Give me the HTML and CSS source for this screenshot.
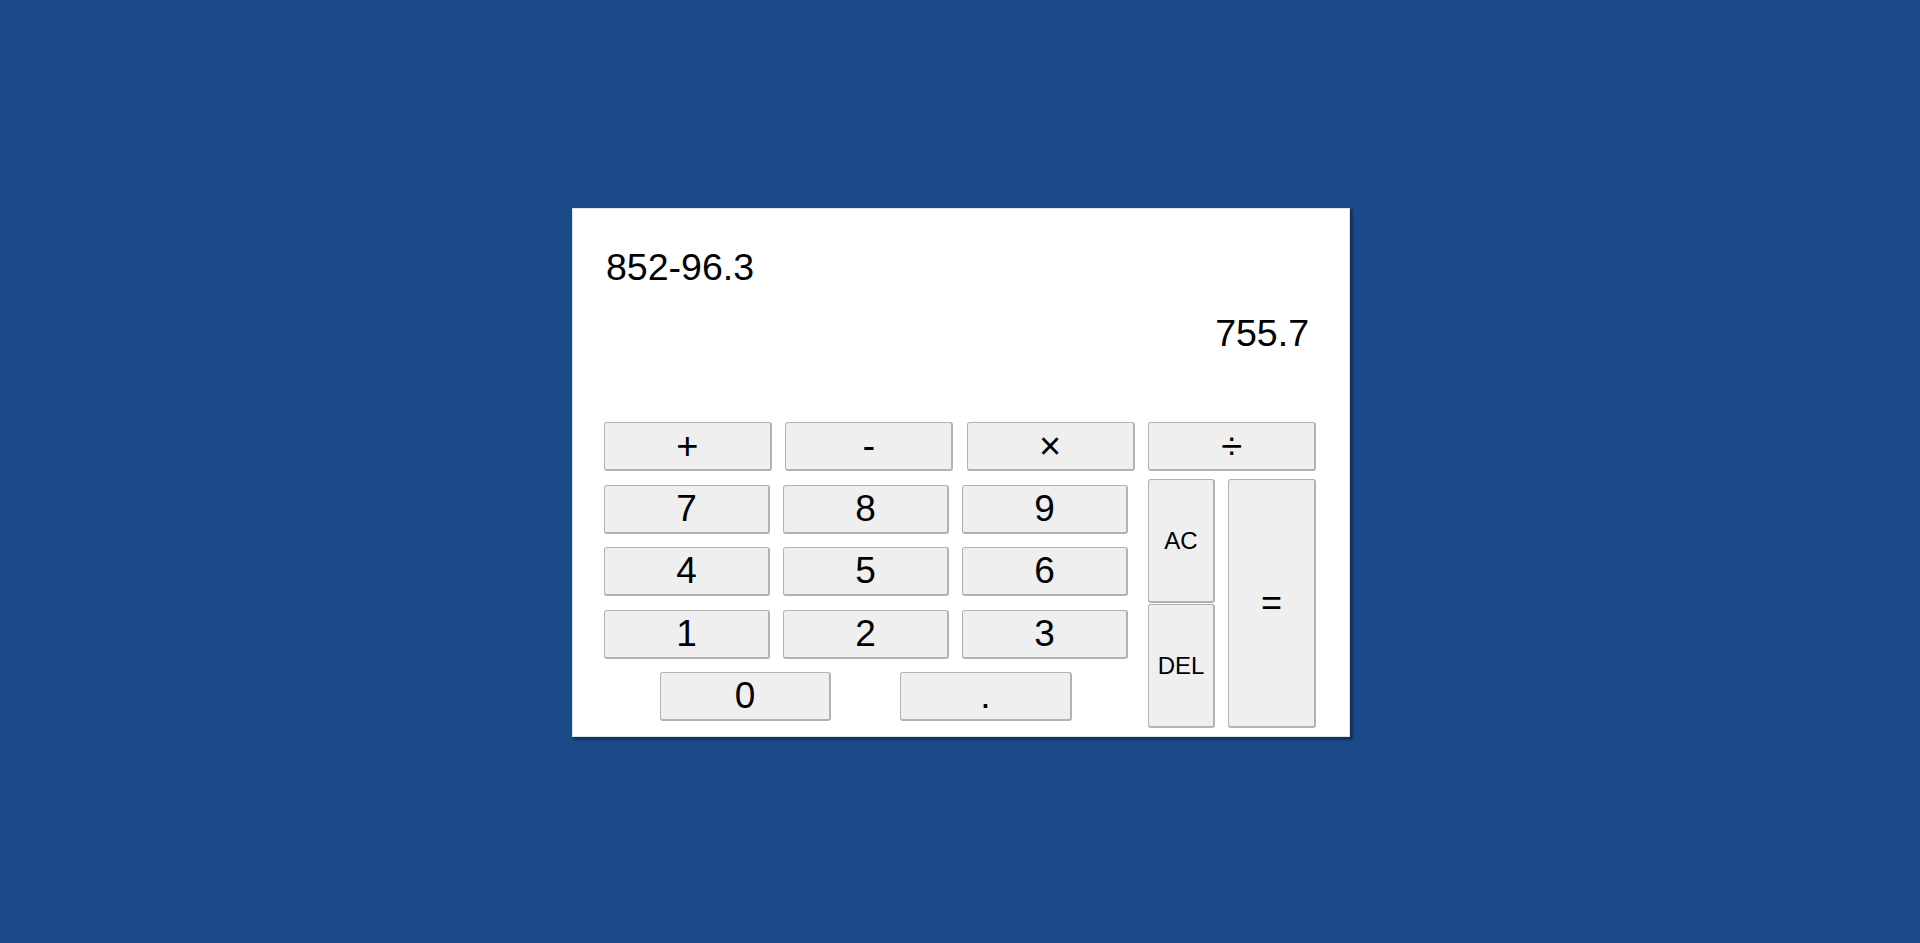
FILE: index.html
```html
<!DOCTYPE html>
<html lang="en">
<head>
<meta charset="utf-8">
<title>Calculator</title>
<link rel="stylesheet" href="styles.css">
</head>
<body>
<main class="page">
  <section class="calc">
    <div class="display">
      <div class="prev">852-96.3</div>
      <div class="current">755.7</div>
    </div>
    <div class="ops">
      <button class="btn op">+</button>
      <button class="btn op">-</button>
      <button class="btn op">×</button>
      <button class="btn op">÷</button>
    </div>
    <div class="lower">
      <div class="nums">
        <div class="grid">
          <button class="btn num">7</button>
          <button class="btn num">8</button>
          <button class="btn num">9</button>
          <button class="btn num">4</button>
          <button class="btn num">5</button>
          <button class="btn num">6</button>
          <button class="btn num">1</button>
          <button class="btn num">2</button>
          <button class="btn num">3</button>
        </div>
        <div class="last-row">
          <button class="btn num zero">0</button>
          <button class="btn num dot">.</button>
        </div>
      </div>
      <div class="side">
        <div class="clear-col">
          <button class="btn small">AC</button>
          <button class="btn small">DEL</button>
        </div>
        <button class="btn equals">=</button>
      </div>
    </div>
  </section>
</main>
</body>
</html>
```

FILE: styles.css
```css
* { box-sizing: border-box; }

html, body {
  margin: 0;
  padding: 0;
  height: 100%;
}

body {
  background: #1b4a8b;
  font-family: "Liberation Sans", Arial, sans-serif;
  color: #000;
}

.page {
  height: 943px;
  display: flex;
  justify-content: center;
  padding-top: 208px;
  padding-left: 2px;
}

.calc {
  width: 778px;
  height: 529px;
  background: #fff;
  border: 1px solid #dde5ee;
  box-shadow: 2px 2px 2px 1px rgba(0, 0, 0, 0.35);
  padding: 0 33px 0 31px;
  display: flex;
  flex-direction: column;
}

.display {
  height: 213px;
  padding-top: 37px;
}

.prev {
  font-size: 37.5px;
  line-height: 42px;
  padding-left: 2px;
}

.current {
  font-size: 37.5px;
  line-height: 42px;
  text-align: right;
  margin-top: 24px;
  padding-right: 7px;
}

.btn {
  font-family: "Liberation Sans", Arial, sans-serif;
  background: #efefef;
  border-style: solid;
  border-color: #b2b2b2;
  border-width: 1px 2px 2px 1px;
  border-radius: 3px;
  color: #000;
  padding: 0;
  margin: 0;
  display: flex;
  align-items: center;
  justify-content: center;
}

.ops {
  display: flex;
  gap: 13.5px;
}

.op {
  width: 168px;
  height: 49px;
  font-size: 38px;
}

.lower {
  display: flex;
  margin-top: 8px;
}

.nums {
  width: 524px;
  margin-top: 6px;
}

.grid {
  display: grid;
  grid-template-columns: repeat(3, 166px);
  grid-auto-rows: 49px;
  column-gap: 13px;
  row-gap: 13.33px;
}

.num {
  font-size: 37px;
  height: 49px;
}

.last-row {
  display: flex;
  margin-top: 13.33px;
}

.zero {
  width: 171px;
  margin-left: 56px;
}

.dot {
  width: 172px;
  margin-left: 69px;
}

.side {
  display: flex;
  margin-left: 20px;
}

.clear-col {
  display: flex;
  flex-direction: column;
  gap: 1px;
}

.small {
  width: 67px;
  height: 124px;
  font-size: 24px;
}

.equals {
  width: 88px;
  height: 249px;
  margin-left: 13px;
  font-size: 36px;
}
```
